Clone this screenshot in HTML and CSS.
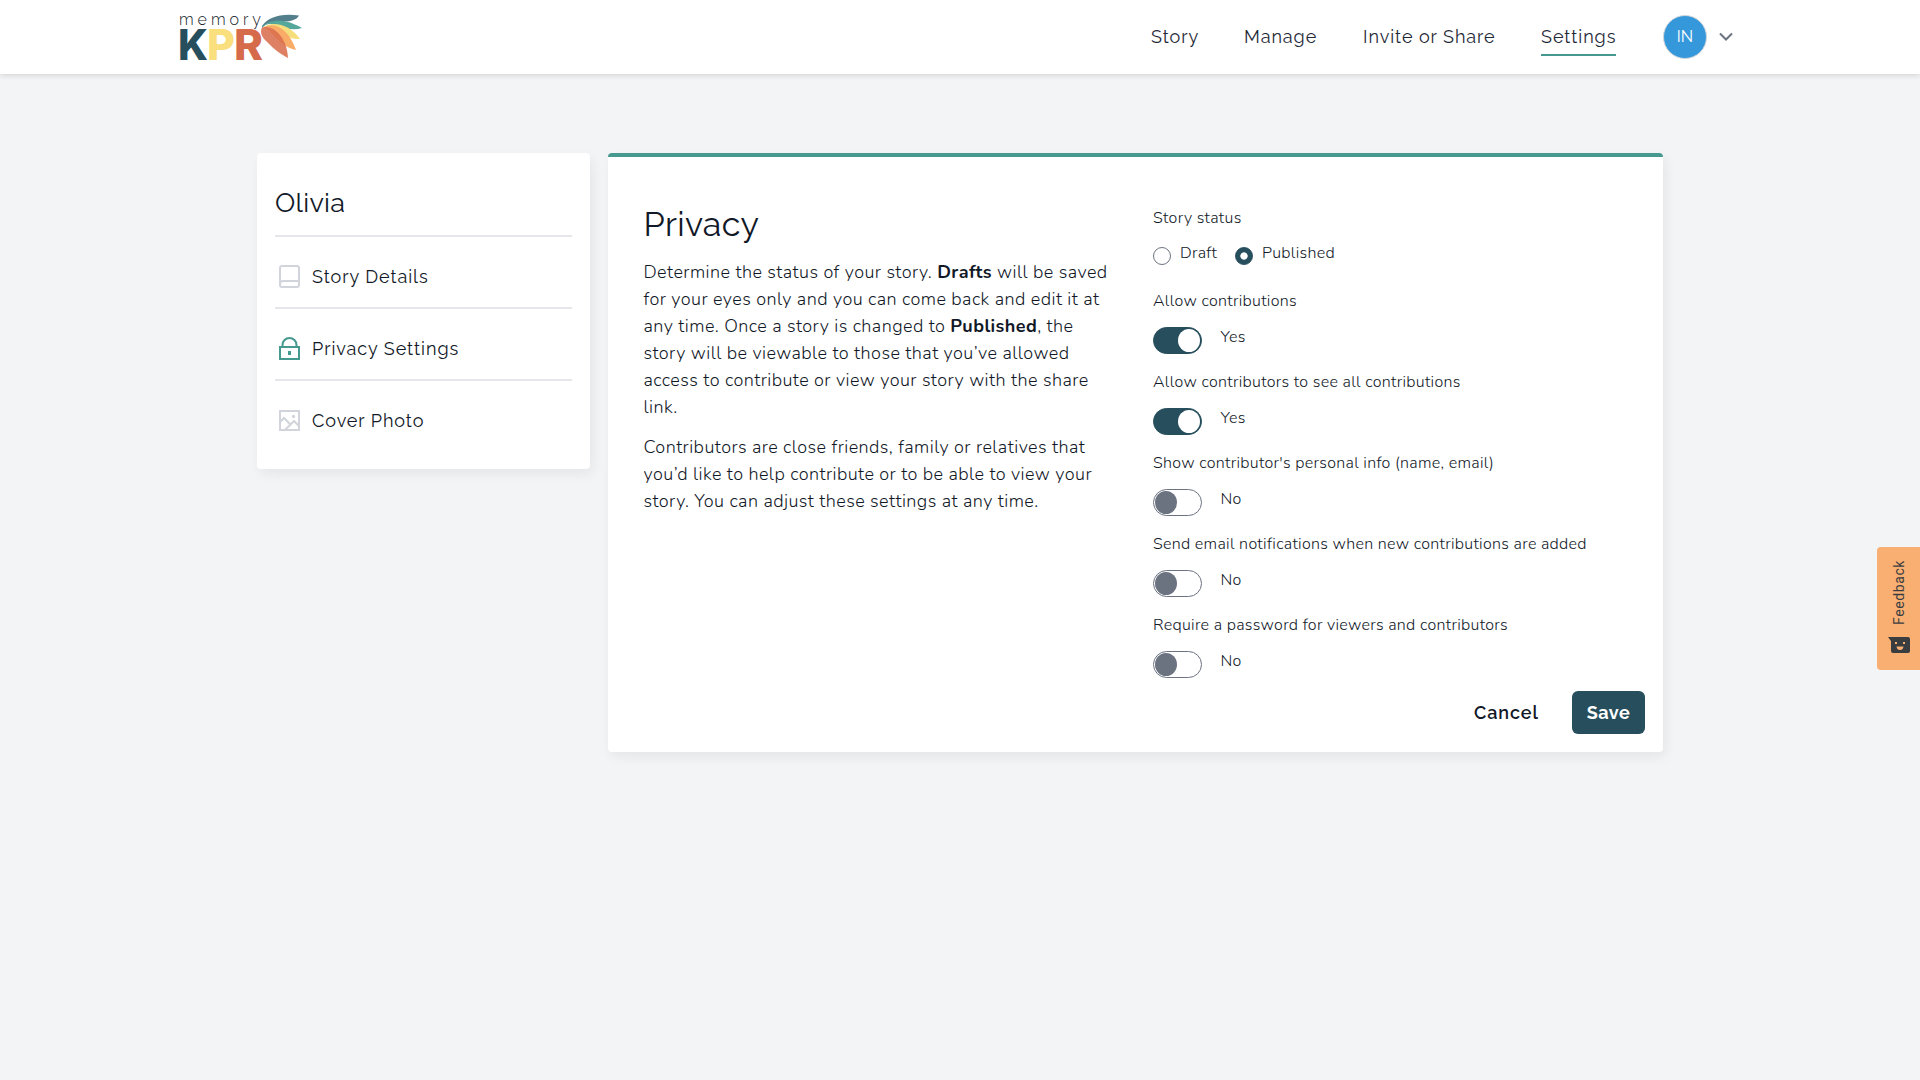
FILE: index.html
```
<!DOCTYPE html>
<html lang="en">
<head>
	<meta charset="UTF-8">
	<title>MemoryKPR - Privacy</title>
	<link rel="stylesheet" href="styles.css">
</head>
<body>
	<header class="header">
		<a href="#" class="logo">
			<svg width="124" height="50" viewBox="0 0 124 50">
				<text class="logo-small" x="-1" y="13" textLength="82">memory</text>
				<text class="logo-big k" x="-2" y="48" textLength="30" lengthAdjust="spacingAndGlyphs">K</text>
				<text class="logo-big p" x="27" y="48" textLength="28" lengthAdjust="spacingAndGlyphs">P</text>
				<text class="logo-big r" x="54" y="48" textLength="29" lengthAdjust="spacingAndGlyphs">R</text>
				<path fill="#537f8c" d="M82 14C88 5 101 1 119 3.500C117 8 110 10 96 10C89 10 85 12 82 16z"/>
				<path fill="#55a79b" d="M82 15C91 6 107 7 122 16C113 19 104 16 96 13C90 11 85 12 82 16z"/>
				<path fill="#f7de7d" d="M82 16C92 8 110 12 120 27C110 28 104 22 97 17C91 13 86 13 82 16z"/>
				<path fill="#f8ac67" d="M82 16C93 9 108 15 116 38C106 36 100 30 94 24C90 19 86 15 82 16z"/>
				<path fill="#d96e4e" fill-opacity=".88" d="M82 15.500C92 12 107 24 108 46C98 41 92 35 85 28C81 24 80 19 82 15.500z"/>
			</svg>
		</a>
		<nav class="nav">
			<a href="#" class="n1">Story</a>
			<a href="#" class="n2">Manage</a>
			<a href="#" class="n3">Invite or Share</a>
			<a href="#" class="n4 on">Settings</a>
		</nav>
		<div class="user">
			<span class="avatar">IN</span>
			<svg width="16" height="10" viewBox="0 0 16 10"><path d="M2 1.500l6 6 6-6" fill="none" stroke="#6b7280" stroke-width="2"/></svg>
		</div>
	</header>

	<div class="wrap">
		<aside class="side">
			<h2>Olivia</h2>
			<ul>
				<li>
					<svg width="21" height="23" viewBox="0 0 21 23" fill="none" stroke="#d1d5db" stroke-width="2"><rect x="1" y="1" width="19" height="21" rx="2"/><path d="M1 19q0-3 3-3h16"/></svg>
					<a href="#" class="s1">Story Details</a>
				</li>
				<li>
					<svg width="21" height="23" viewBox="0 0 21 23" fill="none" stroke="#46998f" stroke-width="2"><path d="M1 10h19v12H1zM3.500 10V8a7 7 0 0 1 14 0v2"/><path d="M10.500 14v4" stroke-width="3"/></svg>
					<a href="#" class="s2">Privacy Settings</a>
				</li>
				<li>
					<svg width="21" height="23" viewBox="0 0 21 23" fill="none" stroke="#d1d5db" stroke-width="2"><rect x="1" y="2" width="19" height="19"/><path d="M1 13l4-4 7 7M6 21l9-9 5 5"/><circle cx="14.500" cy="7.500" r="1.700" fill="#d1d5db" stroke="none"/></svg>
					<a href="#" class="s3">Cover Photo</a>
				</li>
			</ul>
		</aside>

		<main class="main">
			<div class="cols">
				<div class="intro">
					<h1>Privacy</h1>
					<p>Determine the status of your story. <b>Drafts</b> will be saved<br>for your eyes only and you can come back and edit it at<br>any time. Once a story is changed to <b>Published</b>, the<br>story will be viewable to those that you’ve allowed<br>access to contribute or view your story with the share<br>link.</p>
					<p>Contributors are close friends, family or relatives that<br>you’d like to help contribute or to be able to view your<br>story. You can adjust these settings at any time.</p>
				</div>
				<form class="form">
					<div class="field status">
						<div class="label">Story status</div>
						<div class="row">
							<span class="radio"></span><span class="opt">Draft</span>
							<span class="radio checked"></span><span class="opt">Published</span>
						</div>
					</div>
					<div class="field">
						<div class="label">Allow contributions</div>
						<div class="row"><span class="toggle yes"></span><span class="val">Yes</span></div>
					</div>
					<div class="field">
						<div class="label">Allow contributors to see all contributions</div>
						<div class="row"><span class="toggle yes"></span><span class="val">Yes</span></div>
					</div>
					<div class="field">
						<div class="label">Show contributor's personal info (name, email)</div>
						<div class="row"><span class="toggle"></span><span class="val">No</span></div>
					</div>
					<div class="field">
						<div class="label">Send email notifications when new contributions are added</div>
						<div class="row"><span class="toggle"></span><span class="val">No</span></div>
					</div>
					<div class="field">
						<div class="label">Require a password for viewers and contributors</div>
						<div class="row"><span class="toggle"></span><span class="val">No</span></div>
					</div>
				</form>
			</div>
			<div class="buttons">
				<a href="#" class="cancel">Cancel</a>
				<a href="#" class="save">Save</a>
			</div>
		</main>
	</div>

	<div class="feedback">
		<span>Feedback</span>
		<svg width="22" height="17" viewBox="0 0 22 17"><path fill="#3a3d40" d="M0 0h20q2 0 2 2v12q0 2-2 2H5q-2 0-2-2V4z"/><path fill="#faaf72" d="M7 5h2v2H7zM15 5h2v2h-2zM8.500 9.500h7q-.5 3.500-3.500 3.500t-3.500-3.500z"/></svg>
	</div>
</body>
</html>
```
FILE: styles.css
```
*{
	box-sizing: border-box;
}
body{
	margin: 0;
	background: #f3f4f6;
	color: #111827;
	font-family: Raleway, Lato, sans-serif;
	font-size: 18px;
	height: 1080px;
	overflow: hidden;
}
a{
	color: inherit;
	text-decoration: none;
}
.header{
	height: 74px;
	padding-left: 180px;
	display: flex;
	background: #fff;
	box-shadow: 0 1px 6px rgba(0,0,0,.15);
}
.logo{
	width: 971px;
	padding-top: 12px;
}
.logo svg{
	display: block;
	overflow: visible;
}
.logo-small{
	font: 300 16px Raleway, Lato, sans-serif;
	fill: #111827;
}
.logo-big{
	font: 800 43px Inter, sans-serif;
}
.k{
	fill: #264e5c;
}
.p{
	fill: #f9df7e;
}
.r{
	fill: #d66b4b;
}
.nav{
	display: flex;
	padding-top: 18px;
}
.nav a{
	height: 38px;
	line-height: 37px;
	margin-right: 46px;
	white-space: nowrap;
	letter-spacing: .95px;
	color: #1f2937;
}
.n1{ width: 47px; }
.n2{ width: 72px; }
.n3{ width: 132px; }
.nav .n3{
	margin-left: 1px;
}
.nav .n4{
	width: 75px;
	margin-right: 47px;
}
.nav .on{
	border-bottom: 2px solid #46998f;
}
.user{
	display: flex;
	align-items: center;
	gap: 11px;
}
.avatar{
	width: 44px;
	height: 44px;
	line-height: 42px;
	border: 1px solid #d1d5db;
	border-radius: 50%;
	background: #3498db;
	color: #fff;
	font-size: 16px;
	text-align: center;
}
.wrap{
	margin: 79px 257px 0;
	display: flex;
	gap: 18px;
	align-items: flex-start;
}
.side,.main{
	background: #fff;
	border-radius: 4px;
	box-shadow: 3px 5px 12px rgba(0,0,0,.06);
}
.side{
	width: 333px;
	height: 316px;
	padding: 27px 18px 0;
}
.side h2{
	margin: 0;
	height: 57px;
	line-height: 46px;
	font-weight: normal;
	font-size: 27px;
	letter-spacing: .3px;
	border-bottom: 2px solid #e5e7eb;
}
.side ul{
	margin: 0;
	padding: 0;
	list-style: none;
}
.side li{
	height: 72px;
	padding: 8px 4px 0;
	display: flex;
	align-items: center;
	gap: 12px;
	border-bottom: 2px solid #e5e7eb;
	letter-spacing: .95px;
}
.side li:last-child{
	padding-top: 6px;
	border: 0;
}
.main{
	width: 1055px;
	height: 599px;
	border-top: 4px solid #46998f;
}
.cols{
	display: flex;
	height: 534px;
}
.intro{
	width: 545px;
	padding: 43px 0 0 35.5px;
	white-space: nowrap;
}
.intro h1{
	margin: 0 0 11px;
	line-height: 48px;
	font-weight: normal;
	font-size: 34px;
	letter-spacing: .3px;
}
.intro p{
	margin: 0 0 13px;
	font-family: Nunito, Lato, sans-serif;
	font-weight: 300;
	line-height: 27px;
	letter-spacing: .43px;
}
.intro b{
	font-weight: 700;
}
.form{
	padding-top: 49px;
	font-family: Nunito, Lato, sans-serif;
	font-size: 16px;
	font-weight: 300;
	white-space: nowrap;
	letter-spacing: .3px;
}
.field{
	height: 81px;
}
.status{
	height: 83px;
}
.label{
	height: 24px;
	line-height: 24px;
}
.row{
	display: flex;
	align-items: flex-start;
	padding-top: 9px;
}
.status .row{
	padding-top: 11px;
}
.radio{
	width: 18px;
	height: 18px;
	margin-top: 6px;
	border: 1px solid #6b7280;
	border-radius: 50%;
}
.checked{
	border-color: #264e5c;
	background: radial-gradient(circle, #fff 3.3px, #264e5c 4px);
}
.opt{
	width: 64px;
	padding-left: 9px;
	line-height: 24px;
}
.toggle{
	width: 49px;
	height: 27px;
	margin-top: 5px;
	padding: 1px;
	border: 1px solid #6b7280;
	border-radius: 14px;
}
.toggle::after{
	content: "";
	display: block;
	width: 22px;
	height: 23px;
	border-radius: 50%;
	background: #6b7280;
}
.yes{
	border-color: #264e5c;
	background: #264e5c;
}
.yes::after{
	margin-left: 23px;
	background: #fff;
}
.val{
	padding-left: 18.5px;
	line-height: 30px;
}
.buttons{
	display: flex;
	justify-content: flex-end;
	padding-right: 18px;
	font-weight: 600;
	line-height: 43px;
	letter-spacing: .9px;
}
.cancel{
	width: 98px;
}
.save{
	width: 73px;
	height: 43px;
	border-radius: 6px;
	background: #264e5c;
	color: #fff;
	font-weight: bold;
	letter-spacing: .5px;
	text-align: center;
}
.feedback{
	position: fixed;
	right: 0;
	top: 547px;
	width: 43px;
	height: 123px;
	padding-top: 13px;
	display: flex;
	flex-direction: column;
	align-items: center;
	gap: 12px;
	border-radius: 4px 0 0 4px;
	background: #faaf72;
	color: #3a3d40;
	font: 14px/20px Roboto, sans-serif;
	letter-spacing: .6px;
}
.feedback span{
	height: 65px;
	writing-mode: vertical-rl;
	transform: rotate(180deg);
}
```
